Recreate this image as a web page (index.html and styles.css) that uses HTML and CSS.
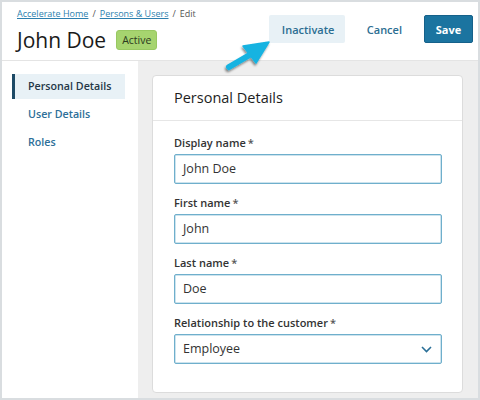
FILE: index.html
```html
<!DOCTYPE html>
<html>
<head>
<meta charset="utf-8">
<link rel="stylesheet" href="styles.css">
</head>
<body>
<div class="frame">
  <header class="header">
    <div class="title-block">
      <nav class="crumbs"><a class="crumb-link">Accelerate Home</a><span class="sep">/</span><a class="crumb-link">Persons &amp; Users</a><span class="sep">/</span><span class="crumb-current">Edit</span></nav>
      <div class="title-row">
        <h1 class="title">John Doe</h1>
        <span class="badge">Active</span>
      </div>
    </div>
    <div class="actions">
      <button class="btn btn-light">Inactivate</button>
      <button class="btn btn-link">Cancel</button>
      <button class="btn btn-primary">Save</button>
    </div>
  </header>
  <div class="body">
    <aside class="sidebar">
      <a class="side-item active">Personal Details</a>
      <a class="side-item">User Details</a>
      <a class="side-item">Roles</a>
    </aside>
    <main class="main">
      <section class="card">
        <div class="card-head">Personal Details</div>
        <div class="card-body">
          <div class="field">
            <label class="label">Display name<span class="req">*</span></label>
            <div class="input">John Doe</div>
          </div>
          <div class="field">
            <label class="label">First name<span class="req">*</span></label>
            <div class="input">John</div>
          </div>
          <div class="field">
            <label class="label">Last name<span class="req">*</span></label>
            <div class="input">Doe</div>
          </div>
          <div class="field">
            <label class="label">Relationship to the customer<span class="req">*</span></label>
            <div class="input select">Employee
              <svg class="chev" width="11" height="7" viewBox="0 0 11 7"><path d="M1 1 L5.5 5.5 L10 1" fill="none" stroke="#2a6f97" stroke-width="1.6"/></svg>
            </div>
          </div>
        </div>
      </section>
    </main>
  </div>
  <svg class="arrow" width="60" height="40" viewBox="0 0 60 40">
    <defs>
      <filter id="sh" x="-30%" y="-30%" width="160%" height="160%">
        <feDropShadow dx="-1" dy="2" stdDeviation="1.2" flood-color="#000" flood-opacity="0.45"/>
      </filter>
    </defs>
    <g filter="url(#sh)" fill="#19b3e1" stroke="#19b3e1" stroke-linejoin="round">
      <line x1="7" y1="31" x2="31" y2="17" stroke-width="6" stroke-linecap="round"/>
      <polygon points="21,10 47,6 34,27" stroke-width="1.5"/>
    </g>
  </svg>
</div>
</body>
</html>
```
FILE: styles.css
```css
* { box-sizing: border-box; }
html, body { margin: 0; padding: 0; }
body {
  font-family: "Open Sans", "Noto Sans", sans-serif;
  color: #222;
}
.frame {
  position: relative;
  width: 480px;
  height: 400px;
  border: 2px solid #d9dde0;
  display: flex;
  flex-direction: column;
  background: #eeeeee;
  overflow: hidden;
}
.header {
  height: 59px;
  flex: none;
  background: #fff;
  border-bottom: 1px solid #e4e4e4;
  display: flex;
  justify-content: space-between;
  align-items: flex-start;
  padding: 0 5px 0 15px;
}
.crumbs {
  margin-top: 6px;
  font-size: 9px;
  line-height: 12px;
  color: #555;
}
.crumb-link {
  color: #2d7fae;
  text-decoration: underline;
}
.sep { margin: 0 4px; color: #555; }
.crumb-current { color: #555; }
.title-row {
  display: flex;
  align-items: center;
  margin-top: 7px;
}
.title {
  margin: 0;
  font-size: 21px;
  font-weight: 400;
  line-height: 26px;
  color: #1a1a1a;
}
.badge {
  margin-left: 10px;
  background: #a6d46f;
  border: 1px solid #98c862;
  border-radius: 3px;
  font-size: 10.5px;
  line-height: 18px;
  padding: 0 5px;
  color: #2c3a20;
}
.actions {
  display: flex;
  gap: 9px;
  margin-top: 13px;
}
.btn {
  font-family: inherit;
  font-size: 11px;
  font-weight: 600;
  height: 28px;
  padding: 0 12px;
  border: 1px solid transparent;
  border-radius: 2px;
  background: none;
}
.btn-light { background: #e8f1f6; color: #2c6e92; width: 76px; }
.btn-link { color: #2c6e92; }
.btn-primary {
  background: #1b74a0;
  border-color: #15618a;
  color: #fff;
  font-weight: 700;
  width: 49px;
  padding: 0;
}
.body {
  flex: 1;
  display: flex;
  min-height: 0;
}
.sidebar {
  width: 136px;
  flex: none;
  background: #fff;
  padding: 13px 13px 0 10px;
  display: flex;
  flex-direction: column;
}
.side-item {
  display: block;
  height: 25px;
  line-height: 25px;
  padding-left: 13px;
  margin-bottom: 3px;
  font-size: 10.7px;
  font-weight: 600;
  color: #2d6f99;
  border-left: 3px solid transparent;
}
.side-item.active {
  background: #e8f1f6;
  border-left-color: #1d4a66;
  color: #243747;
}
.main {
  flex: 1;
  padding: 14px 15px 0 14px;
}
.card {
  background: #fff;
  border: 1px solid #dcdcdc;
  border-radius: 4px;
  height: 318px;
}
.card-head {
  height: 45px;
  border-bottom: 1px solid #e6e6e6;
  padding-left: 21px;
  font-size: 14.5px;
  line-height: 44px;
  color: #1e1e1e;
}
.card-body {
  padding: 14px 20px 0 21px;
}
.field { margin-bottom: 11px; }
.label {
  display: block;
  font-size: 11px;
  font-weight: 600;
  line-height: 16px;
  margin-bottom: 3px;
  color: #333;
}
.req { margin-left: 2px; color: #555; }
.input {
  height: 30px;
  border: 1px solid #6fafcc;
  border-radius: 2px;
  box-shadow: inset 0 0 0 0.5px #9cc8dc;
  padding-left: 8px;
  font-size: 12.5px;
  line-height: 28px;
  color: #333;
  position: relative;
}
.select {
  display: flex;
  justify-content: space-between;
  align-items: center;
  padding-right: 9px;
}
.arrow {
  position: absolute;
  left: 220px;
  top: 34px;
}
```
